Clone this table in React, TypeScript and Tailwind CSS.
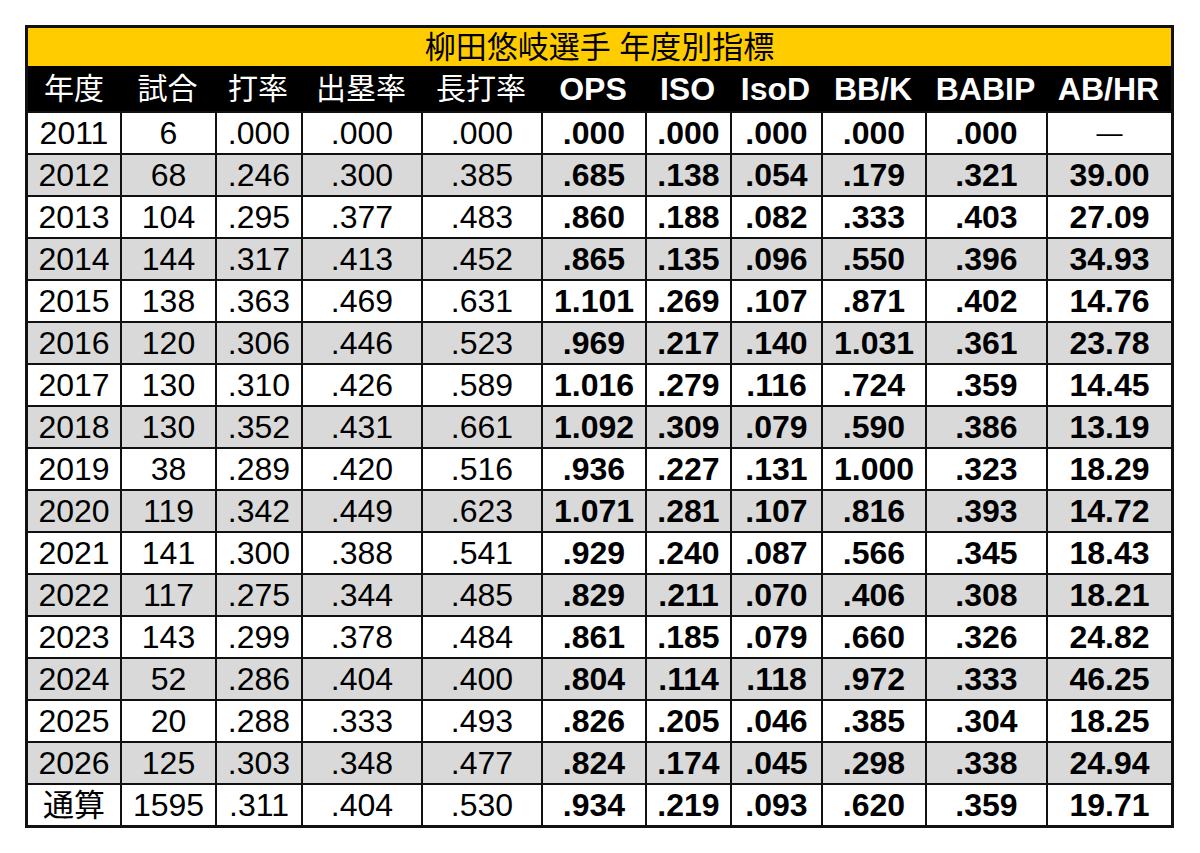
const widths = ["w-[92px]", "w-[95px]", "w-[86px]", "w-[120px]", "w-[120px]", "w-[104px]", "w-[85px]", "w-[91px]", "w-[104px]", "w-[121px]", "w-[125px]"];

const headers = ["年度", "試合", "打率", "出塁率", "長打率", "OPS", "ISO", "IsoD", "BB/K", "BABIP", "AB/HR"];

const rows: string[][] = [
  ["2011", "6", ".000", ".000", ".000", ".000", ".000", ".000", ".000", ".000", "—"],
  ["2012", "68", ".246", ".300", ".385", ".685", ".138", ".054", ".179", ".321", "39.00"],
  ["2013", "104", ".295", ".377", ".483", ".860", ".188", ".082", ".333", ".403", "27.09"],
  ["2014", "144", ".317", ".413", ".452", ".865", ".135", ".096", ".550", ".396", "34.93"],
  ["2015", "138", ".363", ".469", ".631", "1.101", ".269", ".107", ".871", ".402", "14.76"],
  ["2016", "120", ".306", ".446", ".523", ".969", ".217", ".140", "1.031", ".361", "23.78"],
  ["2017", "130", ".310", ".426", ".589", "1.016", ".279", ".116", ".724", ".359", "14.45"],
  ["2018", "130", ".352", ".431", ".661", "1.092", ".309", ".079", ".590", ".386", "13.19"],
  ["2019", "38", ".289", ".420", ".516", ".936", ".227", ".131", "1.000", ".323", "18.29"],
  ["2020", "119", ".342", ".449", ".623", "1.071", ".281", ".107", ".816", ".393", "14.72"],
  ["2021", "141", ".300", ".388", ".541", ".929", ".240", ".087", ".566", ".345", "18.43"],
  ["2022", "117", ".275", ".344", ".485", ".829", ".211", ".070", ".406", ".308", "18.21"],
  ["2023", "143", ".299", ".378", ".484", ".861", ".185", ".079", ".660", ".326", "24.82"],
  ["2024", "52", ".286", ".404", ".400", ".804", ".114", ".118", ".972", ".333", "46.25"],
  ["2025", "20", ".288", ".333", ".493", ".826", ".205", ".046", ".385", ".304", "18.25"],
  ["2026", "125", ".303", ".348", ".477", ".824", ".174", ".045", ".298", ".338", "24.94"],
  ["通算", "1595", ".311", ".404", ".530", ".934", ".219", ".093", ".620", ".359", "19.71"],
];

const font = "font-['Liberation_Sans','Noto_Sans_CJK_JP',sans-serif]";

// Japanese labels run a touch smaller than the Latin figures
const isJa = (s: string) => /[^\x00-\x7f]/.test(s) && s !== "—";

export default function App() {
  return (
    <div className={`min-h-[853px] w-[1200px] bg-white pl-[25px] pt-[25px] ${font}`}>
      <div className="w-[1149px] border-[3px] border-[#111]">
        <div className="flex h-[38px] items-center justify-center bg-[#ffcc00] text-[31px] leading-none text-black">
          柳田悠岐選手 年度別指標
        </div>
        <div className="flex h-[45px] bg-black text-white">
          {headers.map((h, i) => (
            <div
              key={h}
              className={`${widths[i]} flex shrink-0 items-center justify-center leading-none ${
                i >= 5 ? "font-bold text-[32px]" : "font-normal text-[30px]"
              }`}
            >
              {h}
            </div>
          ))}
        </div>
        {rows.map((r, ri) => (
          <div
            key={r[0]}
            className={`flex h-[42px] border-t-2 border-[#111] ${ri % 2 === 1 ? "bg-[#d9d9d9]" : "bg-white"}`}
          >
            {r.map((v, i) => (
              <div
                key={i}
                className={`${widths[i]} flex shrink-0 items-center justify-center leading-none text-black ${
                  i > 0 ? "border-l-2 border-[#111]" : ""
                } ${i >= 5 && v !== "—" ? "font-bold" : "font-normal"} ${
                  v === "—" ? "text-[26px]" : isJa(v) ? "text-[31px]" : "text-[32px]"
                }`}
              >
                {v}
              </div>
            ))}
          </div>
        ))}
      </div>
    </div>
  );
}
